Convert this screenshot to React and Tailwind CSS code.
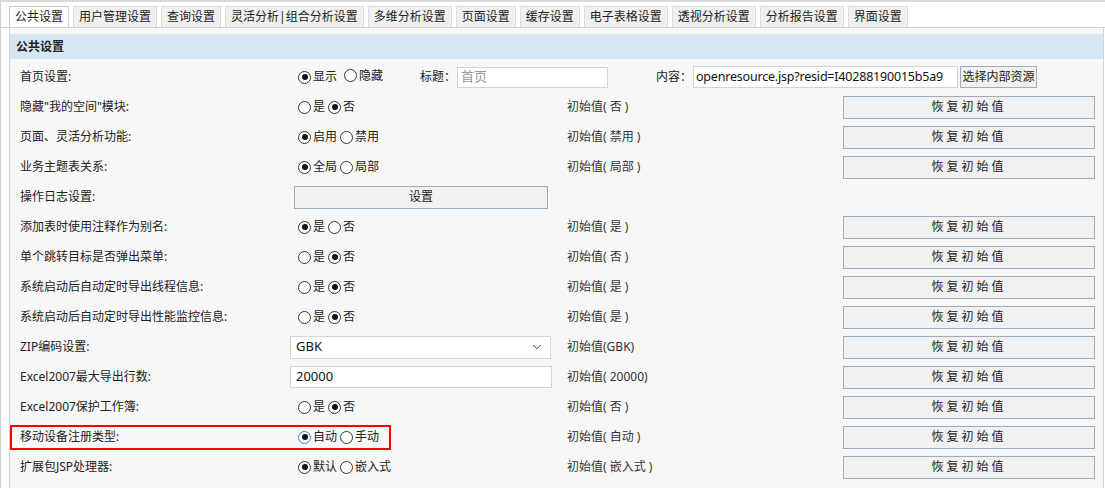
import React from "react";
import { ChevronDown } from "lucide-react";

const tabs = [
  "公共设置",
  "用户管理设置",
  "查询设置",
  "灵活分析|组合分析设置",
  "多维分析设置",
  "页面设置",
  "缓存设置",
  "电子表格设置",
  "透视分析设置",
  "分析报告设置",
  "界面设置",
];

const rows = [
  { label: '隐藏"我的空间"模块:', type: "radio", opts: ["是", "否"], checked: 1, init: "初始值( 否 )" },
  { label: "页面、灵活分析功能:", type: "radio", opts: ["启用", "禁用"], checked: 0, init: "初始值( 禁用 )" },
  { label: "业务主题表关系:", type: "radio", opts: ["全局", "局部"], checked: 0, init: "初始值( 局部 )" },
  { label: "操作日志设置:", type: "button" },
  { label: "添加表时使用注释作为别名:", type: "radio", opts: ["是", "否"], checked: 0, init: "初始值( 是 )" },
  { label: "单个跳转目标是否弹出菜单:", type: "radio", opts: ["是", "否"], checked: 1, init: "初始值( 否 )" },
  { label: "系统启动后自动定时导出线程信息:", type: "radio", opts: ["是", "否"], checked: 1, init: "初始值( 是 )" },
  { label: "系统启动后自动定时导出性能监控信息:", type: "radio", opts: ["是", "否"], checked: 1, init: "初始值( 是 )" },
  { label: "ZIP编码设置:", type: "select", value: "GBK", init: "初始值(GBK)" },
  { label: "Excel2007最大导出行数:", type: "input", value: "20000", init: "初始值( 20000)" },
  { label: "Excel2007保护工作簿:", type: "radio", opts: ["是", "否"], checked: 1, init: "初始值( 否 )" },
  { label: "移动设备注册类型:", type: "radio", opts: ["自动", "手动"], checked: 0, init: "初始值( 自动 )", marked: true },
  { label: "扩展包JSP处理器:", type: "radio", opts: ["默认", "嵌入式"], checked: 0, init: "初始值( 嵌入式 )" },
];

const Radio = ({ checked, focus, children, first }) => (
  <span className={`inline-flex items-center ${first ? "" : "ml-[3px]"}`}>
    <span
      className={`w-[13px] h-[13px] rounded-full border bg-white flex items-center justify-center ${
        focus ? "border-[#2f7fd0]" : "border-[#333]"
      }`}
    >
      {checked && <span className="w-[6px] h-[6px] rounded-full bg-[#111]" />}
    </span>
    <span className="ml-[2px]">{children}</span>
  </span>
);

const ResetButton = () => (
  <button className="w-[252px] h-[23px] border border-[#9dadbf] bg-[#f1f1f1] text-[12px] text-[#222] tracking-[3px]">
    恢复初始值
  </button>
);

const Control = ({ row }) => {
  if (row.type === "radio") {
    return (
      <div className="flex items-center pl-[8px]">
        {row.opts.map((o, i) => (
          <Radio key={o} checked={row.checked === i} focus={row.marked && i === 0} first={i === 0}>
            {o}
          </Radio>
        ))}
      </div>
    );
  }
  if (row.type === "button") {
    return (
      <button className="ml-[4px] w-[254px] h-[23px] border border-[#9dadbf] bg-[#f1f1f1] text-[12px] text-[#222]">
        设置
      </button>
    );
  }
  if (row.type === "select") {
    return (
      <div className="w-[261px] h-[23px] border border-[#d4d4d4] bg-white flex items-center justify-between pl-[5px] pr-[6px] text-[13px] text-[#111]">
        <span>{row.value}</span>
        <ChevronDown size={14} strokeWidth={1.5} className="text-[#222]" />
      </div>
    );
  }
  return (
    <div className="w-[262px] h-[22px] border border-[#d4d4d4] bg-white flex items-center pl-[5px] text-[13px] text-[#111]">
      {row.value}
    </div>
  );
};

export default function App() {
  return (
    <div
      className="w-[1105px] h-[488px] overflow-hidden bg-white border-t-2 border-t-[#d9d9d9] border-l border-l-[#cfcfcf] text-[12px] text-[#222]"
      style={{ fontFamily: '"Noto Sans", "Noto Sans CJK SC", sans-serif' }}
    >
      {/* 标签栏 */}
      <div className="flex items-end gap-[4px] pl-[8px] pt-[4px] border-b border-[#d4d4d4]">
        {tabs.map((t, i) => (
          <div
            key={t}
            className={`h-[21px] px-[5px] flex items-center border border-b-0 leading-none ${
              i === 0 ? "bg-white border-[#cfcfcf]" : "bg-[#f0f0ee] border-[#dcdcdc]"
            }`}
          >
            {t}
          </div>
        ))}
      </div>

      {/* 内容面板 */}
      <div className="ml-[8px] mr-[1px] h-[465px] border-l border-r border-b border-[#d4d4d4] bg-[#f7f7f7] pt-[6px]">
        <div className="h-[25px] bg-[#d5e6f5] flex items-center pl-[6px] font-bold">公共设置</div>

        {/* 首页设置 */}
        <div className="h-[30px] mt-[3px] flex items-center">
          <div className="w-[280px] pl-[10px]">首页设置:</div>
          <div className="w-[130px] flex items-center pl-[8px]">
            <Radio checked first>显示</Radio>
            <span className="ml-[4px]">
              <Radio>隐藏</Radio>
            </span>
          </div>
          <div className="flex items-center">
            <span className="w-[36px]">标题：</span>
            <div className="ml-[1px] w-[151px] h-[21px] border border-[#d4d4d4] bg-white flex items-center pl-[3px] text-[13px] text-[#999]">
              首页
            </div>
          </div>
          <div className="ml-[48px] flex items-center">
            <span className="w-[36px]">内容：</span>
            <div className="ml-[1px] w-[265px] h-[22px] border border-[#d4d4d4] bg-white flex items-center pl-[2px] text-[12.5px] tracking-[-0.2px] text-[#111] overflow-hidden whitespace-nowrap">
              openresource.jsp?resid=I40288190015b5a9
            </div>
            <button className="ml-[2px] h-[22px] w-[77px] border border-[#9dadbf] bg-[#f1f1f1] text-[12px] text-[#222] whitespace-nowrap">
              选择内部资源
            </button>
          </div>
        </div>

        {rows.map((row) => (
          <div key={row.label} className="relative h-[30px] flex items-center">
            {row.marked && (
              <div className="absolute left-0 top-[3px] w-[381px] h-[25px] border-2 border-[#f00]" />
            )}
            <div className="w-[280px] pl-[10px] whitespace-nowrap">{row.label}</div>
            <div className="w-[277px]">
              <Control row={row} />
            </div>
            <div className="w-[276px] text-[#333] whitespace-nowrap">{row.init}</div>
            {row.init && <ResetButton />}
          </div>
        ))}
      </div>
    </div>
  );
}
